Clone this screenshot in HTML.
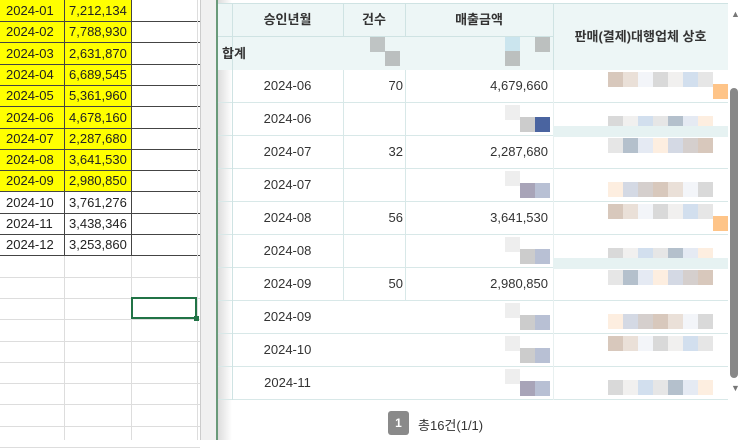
<!DOCTYPE html>
<html><head><meta charset="utf-8"><style>
*{margin:0;padding:0;box-sizing:border-box}
body{width:743px;height:440px;overflow:hidden;background:#fff;position:relative;font-family:"Liberation Sans","Noto Sans CJK KR",sans-serif}
.a{position:absolute}
.xc{position:absolute;height:21.3px;font-size:13px;line-height:21px;color:#222}
.t{position:absolute;font-size:13px;color:#333;line-height:33px}
.b{position:absolute;width:15px;height:15px}
</style></head><body>
<div class="a" style="left:0;top:0;width:131px;height:192px;background:#ffff00"></div>
<div id="grid"></div>
<div class="a" style="left:131px;top:297px;width:66px;height:22px;border:2px solid #217346"></div>
<div class="a" style="left:194px;top:316px;width:5px;height:5px;background:#217346"></div>
<div class="a" style="left:200px;top:0;width:16px;height:440px;background:#f0f0f0;border-left:1px solid #ccc"></div>
<div class="a" style="left:216px;top:0;width:527px;height:440px;background:#fff;border-left:2px solid #6a9a7a"></div>
<div class="a" style="left:218px;top:0;width:14px;height:440px;background:linear-gradient(90deg,#ddd,#fff)"></div>
<div class="a" style="left:218px;top:3px;width:510px;height:67px;background:#edf6f6"></div>
<div class="a" style="left:218px;top:36px;width:335px;height:1px;background:#cfe3e3"></div>
<div class="a" style="left:218px;top:3px;width:510px;height:1px;background:#cfe3e3"></div>
<div id="tbl"></div>
<div class="a" style="left:553px;top:3px;width:1px;height:67px;background:#cfe3e3"></div>
<div class="t" style="left:232px;top:3px;width:111px;text-align:center;font-weight:bold">승인년월</div>
<div class="t" style="left:343px;top:3px;width:62px;text-align:center;font-weight:bold">건수</div>
<div class="t" style="left:405px;top:3px;width:148px;text-align:center;font-weight:bold">매출금액</div>
<div class="t" style="left:553px;top:20px;width:175px;text-align:center;font-weight:bold">판매(결제)대행업체 상호</div>
<div class="t" style="left:222px;top:37px;font-weight:bold">합계</div>
<div class="b" style="left:370px;top:37px;background:#bfc4c4"></div><div class="b" style="left:385px;top:51px;background:#bbbfbf"></div>
<div class="b" style="left:505px;top:37px;background:#cbe5ee"></div><div class="b" style="left:535px;top:37px;background:#bcc0bf"></div><div class="b" style="left:505px;top:51px;background:#bcc0bf"></div>
<div class="a" style="left:728px;top:3px;width:15px;height:398px;background:#fff"></div>
<div class="a" style="left:731px;top:9px;font-size:9px;color:#777">▲</div>
<div class="a" style="left:731px;top:383px;font-size:9px;color:#777">▼</div>
<div class="a" style="left:730px;top:88px;width:8px;height:290px;background:#888;border-radius:4px"></div>
<div class="a" style="left:388px;top:411px;width:21px;height:24px;background:#8a8a8a;border-radius:3px;color:#fff;font-size:12px;font-weight:bold;text-align:center;line-height:24px">1</div>
<div class="a" style="left:418px;top:415px;font-size:13px;color:#333">총16건(1/1)</div>
<script>
var g='';
var ex=[['2024-01','7,212,134'],['2024-02','7,788,930'],['2024-03','2,631,870'],['2024-04','6,689,545'],['2024-05','5,361,960'],['2024-06','4,678,160'],['2024-07','2,287,680'],['2024-08','3,641,530'],['2024-09','2,980,850'],['2024-10','3,761,276'],['2024-11','3,438,346'],['2024-12','3,253,860']];
for(var i=0;i<21;i++){var y=Math.round(i*21.3);g+='<div class="a" style="left:0;top:'+(y+21)+'px;width:200px;height:1px;background:'+(i<12?'#444':'#ddd')+'"></div>';if(i<12){g+='<div class="xc" style="left:6px;top:'+y+'px">'+ex[i][0]+'</div><div class="xc" style="left:69px;top:'+y+'px">'+ex[i][1]+'</div>';}}
[64,131].forEach(function(x){g+='<div class="a" style="left:'+x+'px;top:0;width:1px;height:256px;background:#444"></div><div class="a" style="left:'+x+'px;top:256px;width:1px;height:184px;background:#ddd"></div>';});
g+='<div class="a" style="left:197px;top:0;width:1px;height:440px;background:#ddd"></div>';
document.getElementById('grid').innerHTML=g;
var t='';var L=['2024-06','2024-06','2024-07','2024-07','2024-08','2024-08','2024-09','2024-09','2024-10','2024-11'];
var C={0:['70','4,679,660'],2:['32','2,287,680'],4:['56','3,641,530'],6:['50','2,980,850']};
var cols=['#d8c8bc','#eae0d8','#f3f5f9','#d9d9d9','#f1f0ef','#d2dfee','#e6e6e6','#b4c0cc','#e5eaf3','#fdeee0','#d4d9e4','#d5cfcd'];
for(var i=0;i<10;i++){var y=69+33*i;
t+='<div class="a" style="left:218px;top:'+(y+33)+'px;width:510px;height:1px;background:#d8e8e8"></div>';
t+='<div class="t" style="left:232px;top:'+y+'px;width:111px;text-align:center">'+L[i]+'</div>';
if(C[i]){t+='<div class="t" style="left:343px;top:'+y+'px;width:60px;text-align:right">'+C[i][0]+'</div><div class="t" style="left:405px;top:'+y+'px;width:143px;text-align:right">'+C[i][1]+'</div>';}
else{t+='<div class="b" style="left:505px;top:'+(y+3)+'px;background:#eee"></div><div class="b" style="left:520px;top:'+(y+15)+'px;background:'+(i%3==0?'#a8a4b8':'#ccc')+'"></div><div class="b" style="left:535px;top:'+(y+15)+'px;background:'+(i==1?'#4a64a0':'#b8c0d4')+'"></div>';}
for(var k=0;k<7;k++){t+='<div class="b" style="left:'+(608+k*15)+'px;top:'+(y+(i%2?14:3))+'px;background:'+cols[(k+i*3)%12]+'"></div>';}
}
[232,343,405].forEach(function(x){t+='<div class="a" style="left:'+x+'px;top:3px;width:1px;height:'+(x==232?397:34)+'px;background:#cfe3e3"></div>';});
[343,405].forEach(function(x){t+='<div class="a" style="left:'+x+'px;top:70px;width:1px;height:230px;background:#d8e8e8"></div>';});
t+='<div class="a" style="left:553px;top:70px;width:1px;height:330px;background:#e8f0f0"></div>';
t+='<div class="b" style="left:713px;top:84px;background:#fec488"></div><div class="b" style="left:713px;top:216px;background:#fec488"></div>';
t+='<div class="a" style="left:553px;top:126px;width:175px;height:11px;background:#e6f2f2"></div><div class="a" style="left:553px;top:258px;width:175px;height:11px;background:#e6f2f2"></div>';
document.getElementById('tbl').innerHTML=t;
</script>
</body></html>
